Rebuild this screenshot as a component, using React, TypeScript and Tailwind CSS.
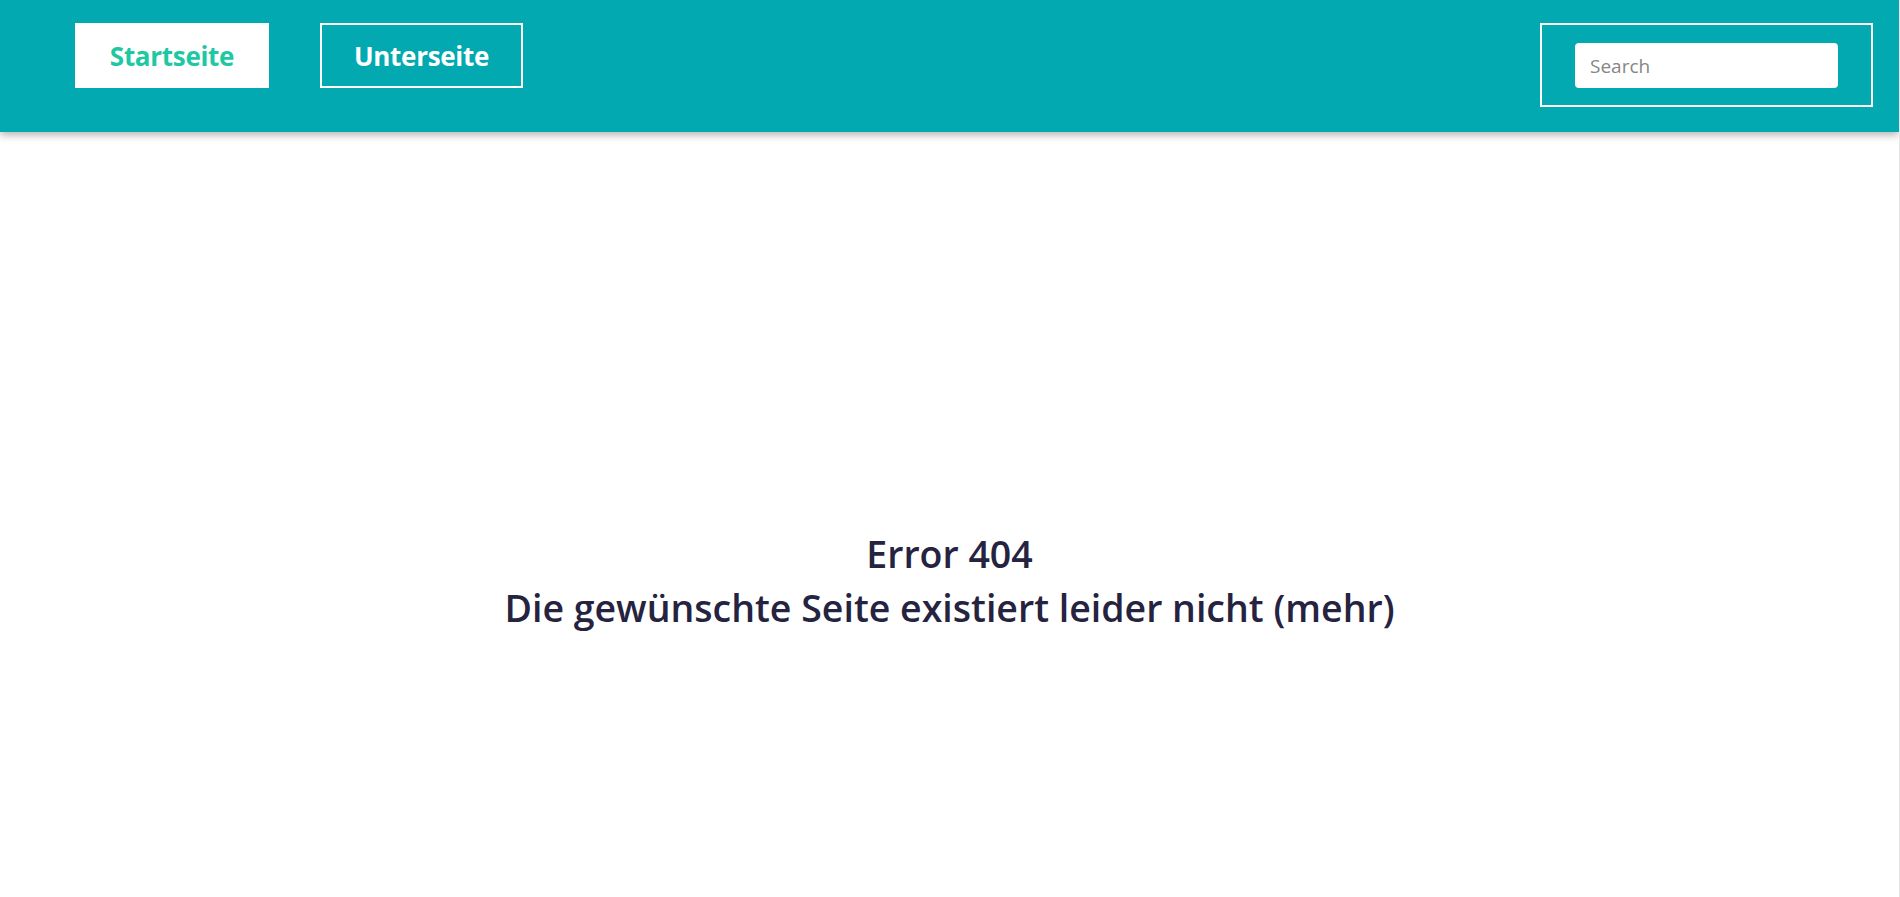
export default function App() {
  return (
    <div className="h-screen overflow-hidden bg-white border-r border-[#e6e6e6]" style={{ fontFamily: '"Open Sans", "Noto Sans", sans-serif' }}>
      {/* Header */}
      <header className="h-[132px] bg-[#03a9b0] shadow-[0_3px_8px_rgba(0,0,0,0.3)] flex justify-between items-start pt-[23px] pl-[75px] pr-[26px] relative z-10">
        <nav className="flex gap-[51px]">
          <a className="h-[65px] w-[194px] pt-[2px] bg-white flex items-center justify-center text-[26px] font-bold text-[#1dc8a3] tracking-[-0.3px]">
            Startseite
          </a>
          <a className="h-[65px] w-[203px] pt-[2px] border-2 border-white flex items-center justify-center text-[26px] font-bold text-white tracking-[-0.3px]">
            Unterseite
          </a>
        </nav>
        <div className="w-[333px] h-[84px] border-2 border-white pl-[33px] pt-[18px]">
          <input
            type="text"
            placeholder="Search"
            className="w-[263px] h-[45px] bg-white rounded-[4px] px-[15px] text-[19px] text-gray-700 placeholder:text-[#868686] outline-none"
          />
        </div>
      </header>

      {/* Content */}
      <main className="h-screen flex flex-col items-center justify-center text-[#25233f] text-[37.5px] font-semibold leading-[54px] text-center">
        <h1>Error 404</h1>
        <p>Die gewünschte Seite existiert leider nicht (mehr)</p>
      </main>
    </div>
  );
}
